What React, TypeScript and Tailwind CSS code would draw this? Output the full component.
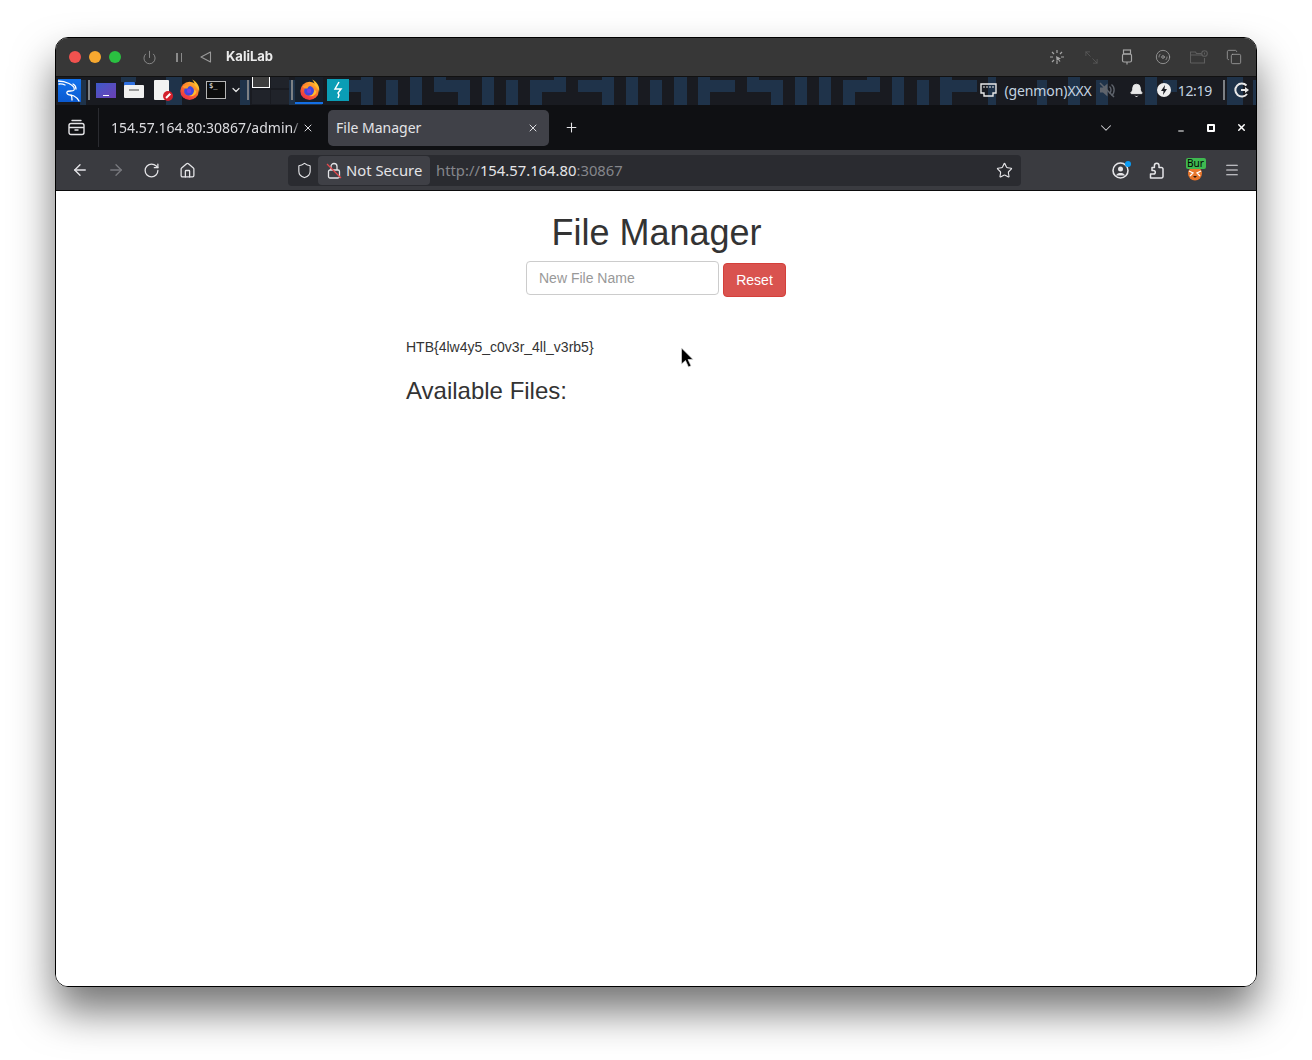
import { useId } from 'react';
import {
  ArrowLeft, ArrowRight, Bell, ChevronDown, Copy, Disc3, Home, Maximize2, Menu,
  Minus, Plus, Power, RotateCw, Shield, Star, X,
} from 'lucide-react';

// wallpaper blocks behind the xfce panel, [x, y, w, h] relative to the panel
const blocks: number[][] = [
  [24, 3, 6, 25], [65, 0, 15, 5], [110, 0, 16, 28], [184, 3, 10, 25], [233, 3, 33, 25],
  [293, 3, 12, 12], [305, 0, 12, 28],
  [330, 3, 12, 25], [354, 0, 12, 28],
  [378, 0, 12, 15], [378, 3, 36, 12], [402, 3, 12, 25],
  [426, 0, 12, 28], [450, 3, 12, 25],
  [474, 3, 12, 25], [474, 3, 36, 12], [498, 0, 12, 15],
  [522, 3, 36, 12], [546, 0, 12, 28],
  [570, 0, 12, 28], [594, 3, 12, 25], [618, 0, 13, 28],
  [642, 0, 12, 28], [642, 3, 37, 12],
  [691, 0, 12, 15], [691, 3, 36, 12], [715, 3, 12, 25],
  [739, 0, 12, 28], [763, 0, 12, 28],
  [787, 3, 12, 25], [787, 3, 37, 12], [811, 0, 13, 15],
  [836, 0, 12, 28], [861, 3, 12, 25],
  [884, 0, 12, 28], [884, 3, 37, 12],
  [932, 0, 8, 28], [981, 3, 10, 25], [1012, 0, 12, 28], [1040, 3, 12, 25], [1089, 0, 12, 28],
  [1107, 3, 14, 12], [1171, 0, 16, 28], [1197, 3, 3, 25],
];

function Firefox() {
  const id = useId();
  return (
    <svg width="21" height="22" viewBox="0 0 24 24">
      <defs>
        <linearGradient id={id} x1="0.8" y1="0" x2="0.2" y2="1">
          <stop offset="0" stopColor="#ffbd2e" />
          <stop offset="0.5" stopColor="#ff6a2b" />
          <stop offset="1" stopColor="#e8264f" />
        </linearGradient>
      </defs>
      <circle cx="12" cy="13" r="10.500" fill={`url(#${id})`} />
      <path d="M15 0c6 3 9 8 8 14-1-3-3-6-5-7 0-2-1-5-3-7z" fill="#ffbd2e" />
      <circle cx="11.500" cy="13" r="5.600" fill="#3f48e0" />
      <circle cx="11.500" cy="13" r="2.500" fill="#7a3fe0" />
      <path d="M4 8c3-2 7-3 10-1-2 0-4 1-4 3-2 1-5 0-6-2z" fill="#ff9a2c" />
      <path d="M17.500 11c0 5-3 7.500-7 7.500 4 1.500 8.500 0 9.500-4.500z" fill="#ffbd2e" />
    </svg>
  );
}

function KaliIcon() {
  return (
    <div className="w-[23px] h-[23px] bg-gradient-to-b from-[#1172ee] to-[#0b5ad0] flex items-center justify-center">
      <svg width="23" height="23" viewBox="0 0 23 23" fill="none" stroke="#fff" strokeWidth="1.300" strokeLinecap="round">
        <path d="M0 2c4 0 8 1 11 2.500 4 2 6 4 5 6.500-1 2-6 0-7 2-1 3 4 3 7 4 3 1.500 4 3 5 5" />
        <path d="M1 5c2-.5 4 0 6 1" />
        <path d="M15 5c2 1 3 3 3 5" />
        <path d="M13 16c1 1 1 3 1 5" />
      </svg>
    </div>
  );
}

function Sep() {
  return <div className="w-[2px] h-5 bg-[#7d8084]" />;
}

function TitleBar() {
  return (
    <div className="h-[39px] shrink-0 bg-[#373737] flex items-center border-b border-[#111111]">
      <div className="w-3 h-3 rounded-full bg-[#f0524f] ml-[13px]" />
      <div className="w-3 h-3 rounded-full bg-[#f7a82f] ml-2" />
      <div className="w-3 h-3 rounded-full bg-[#2ac041] ml-2" />
      <Power size={15} strokeWidth={1.3} className="text-[#9a9a9a] ml-[21px]" />
      <div className="flex gap-[3px] ml-[19px]">
        <div className="w-[1.5px] h-[9px] bg-[#8a8a8a]" />
        <div className="w-[1.5px] h-[9px] bg-[#8a8a8a]" />
      </div>
      <svg width="12" height="12" viewBox="0 0 12 12" fill="none" stroke="#9a9a9a" strokeWidth="1.100" className="ml-[18px]">
        <path d="M10.500 1v10L1 6z" strokeLinejoin="round" />
      </svg>
      <span className="ml-[14px] text-white text-[13px] font-bold font-['Inter',sans-serif] opacity-90">KaliLab</span>
      <div className="flex-1" />
      <svg width="16" height="16" viewBox="0 0 16 16" fill="none" stroke="#a5a5a5" strokeWidth="1.200" className="mr-[19px]">
        <path d="M8 1v3M8 12v3M1 8h3M12 8h3M3 3l2 2M13 3l-2 2M3 13l2-2" />
        <path d="M7 7l5 2.500-2 .7 1.500 2-1 .6-1.400-2-1.400 1.400z" fill="#a5a5a5" stroke="none" />
      </svg>
      <Maximize2 size={15} strokeWidth={1.2} className="text-[#5e5e5e] mr-[22px] rotate-90" />
      <svg width="12" height="16" viewBox="0 0 12 16" fill="none" stroke="#a5a5a5" strokeWidth="1.200" className="mr-[22px]">
        <rect x="2.500" y="1" width="7" height="4" />
        <rect x="1.500" y="5" width="9" height="8" rx="1.500" />
        <path d="M6 13v2.500" />
      </svg>
      <Disc3 size={16} strokeWidth={1.2} className="text-[#a5a5a5] mr-[19px]" />
      <svg width="18" height="14" viewBox="0 0 18 14" fill="none" stroke="#5e5e5e" strokeWidth="1.100" className="mr-[18px]">
        <path d="M.5 13V2h5l1 1.500h5M.5 5h12M.5 13h14V8" />
        <circle cx="14.500" cy="3.500" r="2.800" />
        <path d="M14.500 2.500v2" />
      </svg>
      <Copy size={16} strokeWidth={1.2} className="text-[#a5a5a5] mr-[14px]" />
    </div>
  );
}

function PanelBar() {
  return (
    <div className="relative h-[28px] shrink-0 bg-[#191b21] flex items-center">
      <svg width="1200" height="28" className="absolute left-0 top-0" fill="#1f334a">
        {blocks.map((b, i) => (
          <rect key={i} x={b[0]} y={b[1]} width={b[2]} height={b[3]} />
        ))}
      </svg>
      <div className="relative flex items-center w-full h-full pb-[2px]">
        <div className="ml-[2px]"><KaliIcon /></div>
        <div className="ml-[7px]"><Sep /></div>
        <div className="ml-[6px] w-5 h-[15px] bg-gradient-to-br from-[#3b59c9] to-[#6a3fb5] flex items-end justify-center pb-[2px]">
          <div className="w-[6px] h-[1px] bg-white" />
        </div>
        <div className="ml-2 w-5 h-4 relative">
          <div className="absolute left-0 top-0 w-[11px] h-[5px] bg-[#2e6fe0] rounded-t-[1px]" />
          <div className="absolute left-0 top-[3px] w-5 h-[13px] bg-[#f0f0f0] rounded-[1px] flex justify-center pt-[4px]">
            <div className="w-[10px] h-[2px] bg-[#9a9a9a]" />
          </div>
        </div>
        <div className="ml-[10px] w-[15px] h-[20px] bg-[#f2f2f2] relative rounded-[1px]">
          <div className="absolute -right-[4px] -bottom-[1px] w-[10px] h-[10px] rounded-full bg-[#d3202c] flex items-center justify-center">
            <div className="w-[6px] h-[1.5px] bg-white -rotate-45" />
          </div>
        </div>
        <div className="ml-[10px]"><Firefox /></div>
        <div className="ml-[6px] w-5 h-[18px] bg-[#0c0c0c] border border-[#b5b5b5] text-white text-[7px] leading-[8px] pl-[2px] font-['DejaVu_Sans_Mono',monospace]">$_</div>
        <ChevronDown size={12} strokeWidth={2.4} className="text-[#e5e5e5] ml-1" />
        <div className="ml-[5px]"><Sep /></div>
        <div className="ml-[3px] self-start grid grid-cols-2 gap-[1px] w-[37px] h-[27px]">
          <div className="bg-[#3e3e3e] border border-white border-t-0 h-[11px]" />
          <div className="bg-[#20232a] h-[11px]" />
          <div className="bg-[#20232a] h-[14px]" />
          <div className="bg-[#20232a] h-[14px]" />
        </div>
        <div className="ml-[2px]"><Sep /></div>
        <div className="relative ml-[2px] w-7 h-full flex items-center justify-center bg-[#17202c]">
          <Firefox />
          <div className="absolute -bottom-[1px] left-0 right-0 h-[2px] bg-[#1470e6]" />
        </div>
        <div className="ml-[4px] w-[22px] h-[22px] bg-[#0a9db5] flex items-center justify-center">
          <svg width="12" height="18" viewBox="0 0 12 18" fill="none" stroke="#fff" strokeWidth="1.500">
            <path d="M7 1L3 8h6l-3 4 1 2-1 3" />
          </svg>
        </div>
        <div className="flex-1" />
        <svg width="17" height="14" viewBox="0 0 17 14" fill="none" stroke="#e8e8e8" strokeWidth="1.400" className="mr-[7px]">
          <path d="M1 1h15v9h-3v3H4v-3H1z" />
          <path d="M4 3v2M7 3v2M10 3v2M13 3v2" strokeWidth="1" />
        </svg>
        <span className="text-[14px] text-[#c3d3e0] font-['Noto_Sans',sans-serif] tracking-[-0.1px]">(genmon)XXX</span>
        <svg width="18" height="18" viewBox="0 0 18 18" fill="#5f646c" className="ml-[6px]">
          <path d="M2 6.500h3l4.500-4v13l-4.500-4H2z" />
          <path d="M11.500 5.500c2 1.500 2 5.500 0 7M13.500 3.500c3.500 2.500 3.500 8.500 0 11" fill="none" stroke="#5f646c" strokeWidth="1.400" />
          <path d="M2 2l14 14" stroke="#5f646c" strokeWidth="1.500" />
        </svg>
        <Bell size={15} strokeWidth={1.5} fill="#e8e8e8" className="text-[#e8e8e8] ml-[13px]" />
        <div className="ml-[13px] w-[14px] h-[14px] rounded-full bg-[#eeeeee] flex items-center justify-center">
          <svg width="8" height="10" viewBox="0 0 8 10" fill="#191b21"><path d="M5 0L1 6h2.500L3 10l4-6H4.500z" /></svg>
        </div>
        <span className="ml-[7px] text-[14px] text-[#c3d3e0] font-['Noto_Sans',sans-serif] tracking-[-0.3px]">12:19</span>
        <div className="ml-[11px]"><Sep /></div>
        <svg width="16" height="16" viewBox="0 0 16 16" fill="none" stroke="#e8e8e8" strokeWidth="2" className="ml-[9px] mr-[6px]">
          <path d="M12.500 3.500A6.500 6.500 0 1 0 13 12" />
          <path d="M7 8h6" />
          <path d="M11 5l4 3-4 3z" fill="#e8e8e8" stroke="none" />
        </svg>
      </div>
    </div>
  );
}

function TabBar() {
  return (
    <div className="h-[45px] shrink-0 bg-[#0f1013] flex items-center text-[#e4e4e7] font-['Noto_Sans',sans-serif] text-[14px]">
      <div className="w-[43px] h-[39px] flex items-center justify-center border-r border-[#2a2b30] shrink-0">
        <svg width="17" height="17" viewBox="0 0 17 17" fill="none" stroke="#e4e4e7" strokeWidth="1.400" className="-ml-[1px]">
          <path d="M4 1.500h9" strokeLinecap="round" />
          <rect x="1" y="4.500" width="15" height="11" rx="2" />
          <path d="M1 8.500h15M6.500 11h4" />
        </svg>
      </div>
      <div className="w-[190px] ml-3 whitespace-nowrap text-[#dcdce0] shrink-0 [mask-image:linear-gradient(to_left,transparent,black_8px)]">154.57.164.80:30867/admin/</div>
      <X size={12} strokeWidth={2} className="ml-px text-[#dcdce0] shrink-0" />
      <div className="ml-[14px] w-[221px] h-9 bg-[#404148] rounded-[5px] flex items-center justify-between pl-2 pr-[10px] shrink-0">
        <span>File Manager</span>
        <X size={12} strokeWidth={2} className="text-[#dcdce0]" />
      </div>
      <Plus size={15} strokeWidth={1.7} className="ml-[15px] text-[#e4e4e7]" />
      <div className="flex-1" />
      <ChevronDown size={18} strokeWidth={1.4} className="text-[#d4d4d8] mr-[62px]" />
      <Minus size={8} strokeWidth={3} className="text-white mr-[22px] mt-[6px]" />
      <div className="w-2 h-2 border-2 border-white rounded-[1px] mr-[21px]" />
      <X size={11} strokeWidth={3.2} className="text-white mr-[9px]" />
    </div>
  );
}

function NavBar() {
  return (
    <div className="h-[41px] shrink-0 bg-[#3a3b40] border-b border-[#0b0b0c] flex items-center text-[#e4e4e7]">
      <ArrowLeft size={18} strokeWidth={1.8} className="ml-[15px]" />
      <ArrowRight size={18} strokeWidth={1.8} className="ml-[18px] text-[#77787d]" />
      <RotateCw size={17} strokeWidth={1.8} className="ml-[18px]" />
      <Home size={17} strokeWidth={1.8} className="ml-[19px]" />
      <div className="ml-[92px] w-[733px] h-[31px] bg-[#2a2b30] rounded-[4px] flex items-center font-['Noto_Sans',sans-serif] text-[14.8px]">
        <Shield size={17} strokeWidth={1.6} className="ml-2" />
        <div className="ml-[5px] w-[112px] h-[29px] bg-[#3f4046] rounded-[4px] flex items-center">
          <svg width="16" height="17" viewBox="0 0 16 17" fill="none" stroke="#e4e4e7" strokeWidth="1.300" className="ml-2">
            <path d="M5 8V4.500a3 3 0 0 1 6 0V8" />
            <rect x="2.500" y="8" width="11" height="8" rx="1.500" />
            <path d="M1 2l14 14" stroke="#e5484d" strokeWidth="1.200" />
          </svg>
          <span className="ml-1 text-[#e4e4e7]">Not Secure</span>
        </div>
        <span className="ml-[6px] text-[#85868b]">http://</span>
        <span className="text-[#e4e4e7]">154.57.164.80</span>
        <span className="text-[#85868b]">:30867</span>
        <div className="flex-1" />
        <Star size={17} strokeWidth={1.6} className="mr-2" />
      </div>
      <div className="relative ml-[91px]">
        <svg width="17" height="17" viewBox="0 0 17 17" fill="none" stroke="#e4e4e7" strokeWidth="1.600">
          <circle cx="8.500" cy="8.500" r="7.500" />
          <circle cx="8.500" cy="7" r="2.500" fill="#e4e4e7" stroke="none" />
          <path d="M4 13.500c1-2 2.500-2.500 4.500-2.500s3.500.5 4.500 2.500z" fill="#e4e4e7" stroke="none" />
        </svg>
        <div className="absolute -top-[1px] -right-[2px] w-[6px] h-[6px] rounded-full bg-[#0a9cf5]" />
      </div>
      <svg width="16" height="17" viewBox="0 0 16 17" fill="none" stroke="#e4e4e7" strokeWidth="1.500" className="ml-[20px]">
        <path d="M1.500 16h11a1.500 1.500 0 0 0 1.500-1.500V7a1.500 1.500 0 0 0-1.500-1.500H10V3.500a2.300 2.300 0 0 0-4.600 0v2H3v3h1.500a1.800 1.800 0 0 1 0 3.600H1.500z" strokeLinejoin="round" />
      </svg>
      <div className="relative ml-[21px] w-5 h-[24px]">
        <svg width="16" height="15" viewBox="0 0 16 15" className="absolute left-[1px] top-[8px]">
          <circle cx="8" cy="7.500" r="7" fill="#e8762c" />
          <path d="M2 5l4 2-3 3M14 5l-4 2 3 3" fill="none" stroke="#fff" strokeWidth="1.300" />
          <path d="M6 10h4l-2 2z" fill="#2a1a10" />
        </svg>
        <div className="absolute left-0 top-0 w-5 h-[11px] bg-[#3fb950] rounded-[2px] text-[10px] leading-[11px] text-black font-['Noto_Sans',sans-serif] pl-px">Bur</div>
      </div>
      <Menu size={16} strokeWidth={1.6} className="ml-[18px]" />
    </div>
  );
}

function Page() {
  return (
    <div className="relative flex-1 bg-white font-['Liberation_Sans',sans-serif] text-[#333333]">
      <h1 className="text-[36px] leading-[40px] text-center mt-[22px] pl-px">File Manager</h1>
      <div className="flex justify-center items-start mt-[8px] gap-1">
        <input
          placeholder="New File Name"
          readOnly
          className="w-[193px] h-[34px] px-3 border border-[#cccccc] rounded-[4px] text-[14px] placeholder:text-[#999999] outline-none"
        />
        <button className="mt-[2px] w-[63px] h-[34px] bg-[#d9534f] border border-[#d43f3a] rounded-[4px] text-white text-[14px]">Reset</button>
      </div>
      <div className="w-[500px] mx-auto">
        <p className="text-[14px] leading-[20px] mt-[40px]">HTB{'{'}4lw4y5_c0v3r_4ll_v3rb5{'}'}</p>
        <h3 className="text-[24px] leading-[26px] mt-[21px]">Available Files:</h3>
      </div>
      <svg width="14" height="22" viewBox="0 0 14 22" className="absolute left-[624px] top-[156px]">
        <path d="M1.500 1v16l4-3.500 3 6.500 2.500-1.200-3-6.300h5z" fill="#000" stroke="#ddd" strokeWidth="0.7" />
      </svg>
    </div>
  );
}

export default function App() {
  return (
    <div className="w-[1312px] h-[1060px] bg-white overflow-hidden pt-[37px] pl-[55px]">
      <div className="w-[1202px] h-[950px] border border-black rounded-[13px] overflow-hidden flex flex-col shadow-[0_24px_42px_rgba(0,0,0,0.55)]">
        <TitleBar />
        <PanelBar />
        <TabBar />
        <NavBar />
        <Page />
      </div>
    </div>
  );
}
